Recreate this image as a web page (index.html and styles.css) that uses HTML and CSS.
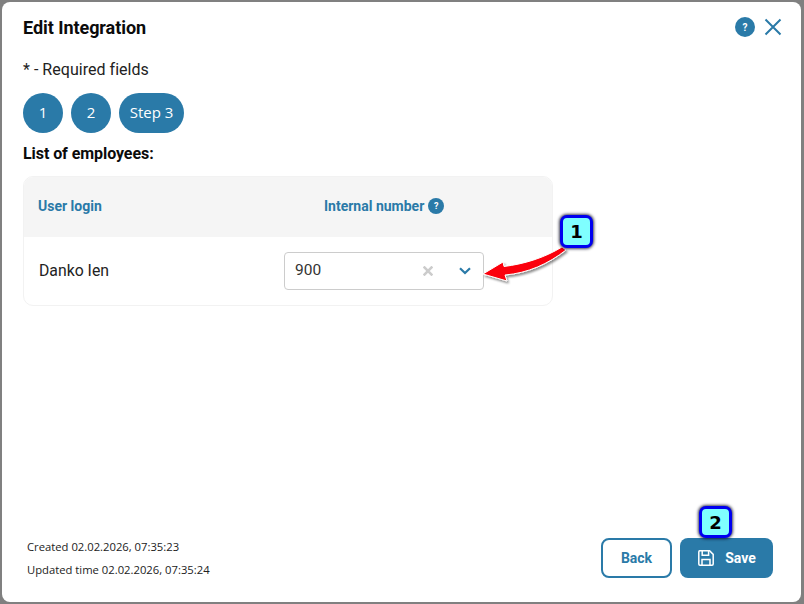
FILE: index.html
```html
<!DOCTYPE html>
<html lang="en">
<head>
<meta charset="utf-8">
<title>Edit Integration</title>
<link rel="stylesheet" href="styles.css">
</head>
<body>
<div class="modal">
  <header class="head">
    <h1 class="title">Edit Integration</h1>
    <div class="head-actions">
      <span class="help help-lg">?</span>
      <svg class="close" width="18" height="18" viewBox="0 0 18 18"><path d="M1.5 1.5L16.5 16.5M16.5 1.5L1.5 16.5" stroke="#2a7aa8" stroke-width="2" fill="none"/></svg>
    </div>
  </header>
  <p class="required">* - Required fields</p>
  <div class="steps">
    <span class="step">1</span>
    <span class="step">2</span>
    <span class="step step-wide">Step 3</span>
  </div>
  <h2 class="list-title">List of employees:</h2>
  <div class="table">
    <div class="thead">
      <div class="col-login">User login</div>
      <div class="col-num">Internal number <span class="help help-sm">?</span></div>
    </div>
    <div class="row">
      <div class="cell-login">Danko Ien</div>
      <div class="select">
        <span class="select-value">900</span>
        <svg class="clear" width="10" height="10" viewBox="0 0 10 10"><path d="M.6 .6L9.4 9.4M9.4 .6L.6 9.4" stroke="#cccccc" stroke-width="2.6" fill="none"/></svg>
        <svg class="chev" width="12" height="8" viewBox="0 0 12 8"><path d="M1 1.2L6 6L11 1.2" stroke="#2a7aa8" stroke-width="2.2" fill="none"/></svg>
      </div>
    </div>
  </div>
  <footer class="foot">
    <div class="meta">
      <div>Created 02.02.2026, 07:35:23</div>
      <div>Updated time 02.02.2026, 07:35:24</div>
    </div>
    <div class="buttons">
      <button class="btn btn-back">Back</button>
      <button class="btn btn-save">
        <svg width="18" height="18" viewBox="0 0 18 18" fill="none" stroke="#fff" stroke-width="1.5"><path d="M2.8 1.8H12.6L16.2 5.4V15A1.2 1.2 0 0 1 15 16.2H3A1.2 1.2 0 0 1 1.8 15V3A1.2 1.2 0 0 1 2.8 1.8Z"/><path d="M5.2 2V6.2H11.6V2"/><path d="M5 16V10.4H13V16"/></svg>
        Save
      </button>
    </div>
  </footer>
</div>
<svg class="arrow" width="104" height="60" viewBox="0 0 104 60">
  <defs><filter id="sh" x="-20%" y="-20%" width="150%" height="150%"><feDropShadow dx="1.5" dy="2" stdDeviation="1.2" flood-color="#000" flood-opacity=".45"/></filter></defs>
  <path d="M1 39L21 27L22 31.5C42 29 62 23 80 12L84 15C66 29 46 38 23 40L25 46Z" fill="#fb0007" stroke="#fff" stroke-width="1" filter="url(#sh)"/>
</svg>
<div class="badge badge-1">1</div>
<div class="badge badge-2">2</div>
</body>
</html>
```
FILE: styles.css
```css
* { box-sizing: border-box; }
html, body { margin: 0; height: 100%; }
body {
  background: #808080;
  padding: 2px 3px 2px 2px;
  font-family: Roboto, sans-serif;
  color: #111;
  overflow: hidden;
}
.modal {
  height: 100%;
  background: #fff;
  border-radius: 8px;
  padding: 0 21px 24px 21px;
  display: flex;
  flex-direction: column;
}
.head {
  display: flex;
  justify-content: space-between;
  align-items: center;
  height: 50px;
}
.title {
  margin: 0;
  font-size: 18px;
  font-weight: 700;
  letter-spacing: -0.05px;
  color: #0b0b0b;
}
.head-actions { display: flex; align-items: center; gap: 9px; margin-right: -2px; }
.help {
  display: inline-flex;
  align-items: center;
  justify-content: center;
  border-radius: 50%;
  background: #2a7aa8;
  color: #fff;
  font-weight: 700;
}
.help-lg { width: 20px; height: 20px; font-size: 10px; }
.help-sm { width: 16px; height: 16px; font-size: 9px; margin-left: 1px; }
.required { margin: 9px 0 0; font-size: 16px; line-height: 18px; letter-spacing: .03px; color: #222; }
.steps { display: flex; gap: 8px; margin-top: 14px; }
.step {
  min-width: 40px;
  height: 40px;
  border-radius: 20px;
  background: #2a7aa8;
  color: #fff;
  display: flex;
  align-items: center;
  justify-content: center;
  padding-bottom: 2px;
  font-family: "Open Sans", sans-serif;
  font-size: 15px;
}
.step-wide { width: 65px; }
.list-title { margin: 11px 0 0; font-size: 16px; line-height: 19px; font-weight: 700; color: #0b0b0b; letter-spacing: -0.07px; }
.table {
  width: 530px;
  margin-top: 13px;
  border: 1px solid #f2f2f2;
  border-radius: 10px;
  overflow: hidden;
}
.thead {
  height: 60px;
  padding-bottom: 2px;
  background: #f5f5f5;
  display: flex;
  align-items: center;
  font-size: 14px;
  font-weight: 700;
  color: #2a7aa8;
}
.col-login { width: 300px; padding-left: 14px; }
.col-num { display: flex; align-items: center; gap: 3px; }
.row { height: 68px; display: flex; align-items: center; }
.cell-login { width: 260px; padding: 0 0 2px 15px; font-size: 15.8px; color: #222; }
.select {
  width: 200px;
  height: 38px;
  border: 1px solid #ccc;
  border-radius: 4px;
  display: flex;
  align-items: center;
  padding: 0 12px 0 10px;
  font-size: 15.5px;
  color: #333;
}
.select-value { flex: 1; padding-bottom: 2px; }
.clear { margin-right: 26px; }
.foot {
  margin-top: auto;
  display: flex;
  justify-content: space-between;
  align-items: flex-end;
}
.meta {
  font-family: "Open Sans", sans-serif;
  font-size: 11.25px;
  line-height: 23px;
  color: #222;
  padding-left: 4px;
  margin-bottom: -3px;
}
.buttons { display: flex; gap: 8px; margin-right: 7px; }
.btn {
  height: 40px;
  border-radius: 8px;
  font-family: Roboto, sans-serif;
  font-size: 14px;
  font-weight: 700;
  display: flex;
  align-items: center;
  justify-content: center;
  gap: 10px;
  padding: 0;
}
.btn-back { width: 71px; background: #fff; color: #2a7aa8; border: 2px solid #2a7aa8; }
.btn-save { width: 93px; background: #2a7aa8; color: #fff; border: 0; }
.arrow { position: absolute; left: 482px; top: 235px; }
.badge {
  position: absolute;
  width: 33px;
  background: #7fffff;
  border: 3px solid #0000f0;
  border-radius: 7px;
  box-shadow: 0 0 3px 1px rgba(0,0,30,.75);
  display: flex;
  align-items: center;
  justify-content: center;
  font-family: "DejaVu Sans", sans-serif;
  font-weight: 700;
  font-size: 18px;
  color: #000;
}
.badge-1 { left: 560px; top: 215px; height: 33px; }
.badge-2 { left: 699px; top: 506px; height: 32px; }
```
